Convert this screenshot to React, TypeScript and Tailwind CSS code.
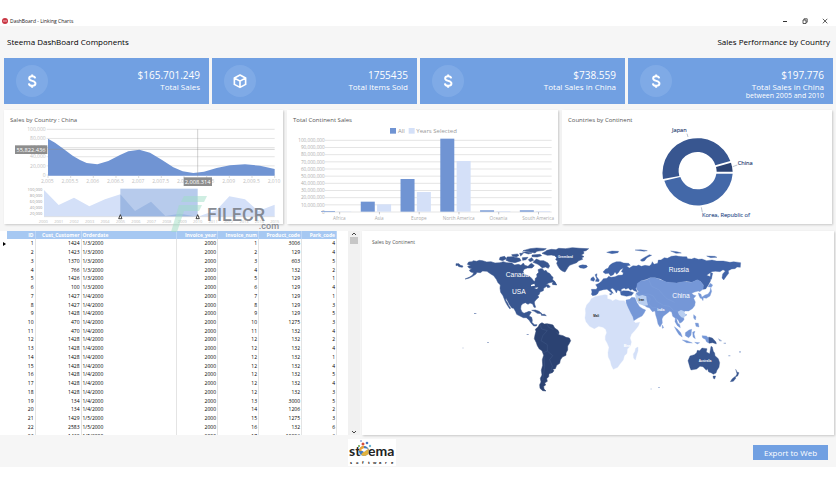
import React from "react";

const orders: string[][] = [
  ["1", "1424", "1/3/2000", "2000", "1", "3006", "4"],
  ["2", "1423", "1/3/2000", "2000", "2", "129", "4"],
  ["3", "1370", "1/3/2000", "2000", "3", "603", "5"],
  ["4", "766", "1/3/2000", "2000", "4", "132", "2"],
  ["5", "1426", "1/3/2000", "2000", "5", "129", "1"],
  ["6", "100", "1/3/2000", "2000", "6", "129", "4"],
  ["7", "1427", "1/4/2000", "2000", "7", "129", "1"],
  ["8", "1427", "1/4/2000", "2000", "8", "129", "3"],
  ["9", "1428", "1/4/2000", "2000", "9", "129", "5"],
  ["10", "470", "1/4/2000", "2000", "10", "1275", "3"],
  ["11", "470", "1/4/2000", "2000", "11", "132", "4"],
  ["12", "1428", "1/4/2000", "2000", "12", "132", "2"],
  ["13", "1428", "1/4/2000", "2000", "12", "132", "4"],
  ["14", "1428", "1/4/2000", "2000", "12", "132", "1"],
  ["15", "1428", "1/4/2000", "2000", "12", "132", "4"],
  ["16", "1428", "1/4/2000", "2000", "12", "132", "5"],
  ["17", "1428", "1/4/2000", "2000", "12", "132", "4"],
  ["18", "1428", "1/4/2000", "2000", "12", "132", "3"],
  ["19", "134", "1/4/2000", "2000", "13", "3000", "5"],
  ["20", "134", "1/4/2000", "2000", "14", "1206", "2"],
  ["21", "1429", "1/5/2000", "2000", "15", "1275", "3"],
  ["22", "2583", "1/5/2000", "2000", "16", "132", "6"],
  ["23", "1430", "1/5/2000", "2000", "17", "10006", "6"],
];

const headings = ["ID", "Cust_Customer", "Orderdate", "Invoice_year", "Invoice_num", "Product_code", "Park_code"];

function DollarIcon() {
  return (
    <svg viewBox="0 0 24 24" className="h-[18px] w-[18px]" fill="none" stroke="white" strokeWidth="2.6" aria-hidden="true">
      <path d="M16.3 8.6C16 6.7 14.5 5.7 12.2 5.7 9.800 5.700 8.200 6.800 8.200 8.600c0 4.400 8.400 2.200 8.400 6.700 0 1.900-1.700 3.100-4.300 3.100-2.700 0-4.300-1.200-4.500-3.300M12.200 3.200v3M12.200 18v3" />
    </svg>
  );
}

function BoxIcon() {
  return (
    <svg viewBox="0 0 24 24" className="h-[18px] w-[18px]" fill="none" stroke="white" strokeWidth="2.2" strokeLinejoin="round" aria-hidden="true">
      <path d="M12 4 19.500 8v8.500L12 20.500 4.500 16.500V8ZM4.500 8 12 12.200 19.500 8M12 12.200v8" />
    </svg>
  );
}

function StatCard({ value, label, note, icon }: { value: string; label: string; note?: string; icon: React.ReactNode }) {
  return (
    <section className="flex h-[46px] items-start justify-between bg-[#71a0e2] pr-[9px] pl-3 text-white">
      <div className="mt-[7px] flex h-8 w-8 items-center justify-center rounded-full bg-[#7faae6]">{icon}</div>
      <div className="flex flex-col items-end pt-[11px]">
        <strong className="text-[10px] leading-[12px] font-normal">{value}</strong>
        <span className="text-[8px] leading-[11px]">{label}</span>
        {note && <span className="text-[7px] leading-[7px]">{note}</span>}
      </div>
    </section>
  );
}

function Panel({ title, children }: { title: string; children: React.ReactNode }) {
  return (
    <section className="relative bg-white shadow-[1px_1px_2px_#c8c8c8]">
      <h2 className="h-[15px] pt-[5px] pl-[6px] text-[6px] leading-[10px] text-[#555]">{title}</h2>
      {children}
    </section>
  );
}

const areaTicks = ["2,005", "2,005.5", "2,006", "2,006.5", "2,007", "2,007.5", "2,008", "2,008.5", "2,009", "2,009.5", "2,010"];
const years = ["2000", "2001", "2002", "2003", "2004", "2005", "2006", "2007", "2008", "2009", "2010", "2011", "2012", "2013", "2014", "2015"];

function AreaChart() {
  return (
    <svg viewBox="12 60 837 297" className="block w-full" fontSize="15" fill="#c0c0c0">
      {["100,000", "80,000", "60,000", "40,000", "20,000", "0"].map((t, i) => (
        <g key={t}>
          <path d={`M140 ${73 + i * 27.4}H824`} stroke="#dedede" strokeWidth="2.500" />
          <text x="137" y={78 + i * 27.4} textAnchor="end">{t}</text>
        </g>
      ))}
      <path fill="#7094d3" d="M144 101 165 113 190 131 218 152 240 165 260 174 292 178 325 168 360 150 385 139 418 134 450 143 485 164 520 187 548 199 580 204 612 200 650 189 690 181 735 178 780 182 824 192V212H144Z" />
      <path d="M144 133H824M593 73V215" stroke="#8e8e8e" strokeWidth="2" fill="none" opacity=".6" />
      {areaTicks.map((t, i) => (
        <g key={t}>
          <path d={`M${144 + i * 68} 212v7`} stroke="#c8c8c8" strokeWidth="2" />
          <text x={142 + i * 68} y="235" textAnchor="middle">{t}</text>
        </g>
      ))}
      <rect x="45" y="121" width="97" height="26" fill="#8d8d8d" />
      <text x="93" y="140" textAnchor="middle" fill="white" fontSize="17">55,822.436</text>
      <rect x="551" y="217" width="85" height="26" fill="#8d8d8d" />
      <text x="593" y="236" textAnchor="middle" fill="white" fontSize="17">2,008.314</text>

      {["100,000", "80,000", "60,000", "40,000", "20,000"].map((t, i) => (
        <text key={t} x="127" y={259 + i * 17.500} textAnchor="end" fill="#999" fontSize="12">{t}</text>
      ))}
      <path fill="#d4e0f8" d="M132 255 176 300 222 278 268 304 315 283 361 268V335H132ZM593 335 650 315 688 274 735 283 775 318 824 299V335Z" />
      <rect x="361" y="251" width="232" height="84" fill="#b7cbec" />
      <path fill="#9db8e3" d="M361 268 405 318 453 290 496 333 540 326 593 335H361Z" />
      <path d="M132 335H824" stroke="#dcdcdc" strokeWidth="2" />
      {years.map((t, i) => (
        <text key={t} x={130 + i * 46.300} y="355" textAnchor="middle" fontSize="12">{t}</text>
      ))}
      <path d="M361 329 366 341H356ZM593 329 598 341H588Z" fill="white" stroke="#222" strokeWidth="2.500" />
    </svg>
  );
}

const continents = [
  { name: "Africa", all: 2, sel: 1 },
  { name: "Asia", all: 30, sel: 22 },
  { name: "Europe", all: 98, sel: 59 },
  { name: "North America", all: 219, sel: 152 },
  { name: "Oceania", all: 4, sel: 2 },
  { name: "South America", all: 4, sel: 2 },
];
const barTicks = ["100,000,000", "90,000,000", "80,000,000", "70,000,000", "60,000,000", "50,000,000", "40,000,000", "30,000,000", "20,000,000", "10,000,000", "0"];

function BarChart() {
  return (
    <svg viewBox="21 60 813 297" className="block w-full" fontSize="14" fill="#ababab">
      <rect x="330" y="69" width="18" height="17" fill="#7094d3" />
      <text x="354" y="83" fontSize="18" fill="#999">All</text>
      <rect x="386" y="69" width="18" height="17" fill="#d4e0f8" />
      <text x="409" y="83" fontSize="18" fill="#999">Years Selected</text>
      {barTicks.map((t, i) => (
        <g key={t}>
          <path d={`M135 ${106 + i * 21.500}H815`} stroke="#e0e0e0" strokeWidth="2.500" />
          <text x="134" y={111 + i * 21.500} textAnchor="end">{t}</text>
        </g>
      ))}
      {continents.map((c, i) => (
        <g key={c.name}>
          <rect x={123 + i * 119.300} y={320 - c.all} width="42" height={c.all} fill="#7094d3" />
          <rect x={172 + i * 119.300} y={320 - c.sel} width="42" height={c.sel} fill="#d4e0f8" />
          <path d={`M${179 + i * 119.300} 321v7`} stroke="#a8a8a8" strokeWidth="2" />
          <text x={178 + i * 119.300} y="344" textAnchor="middle">{c.name}</text>
        </g>
      ))}
    </svg>
  );
}

function DonutChart() {
  return (
    <svg viewBox="6 60 810 297" className="block w-full" fontSize="17">
      <path fill="#385690" d="M309 222A105 105 0 0 1 511 168L466 181A56 56 0 0 0 358 213Z" />
      <path fill="#2b4272" d="M513 173A105 105 0 0 1 518 200H470A56 56 0 0 0 468 186Z" />
      <path fill="#4368a8" d="M518 206A105 105 0 0 1 313 227L361 216A56 56 0 0 0 469 206Z" />
      <path d="M384 96 381 86M518 185 532 180M424 307 427 322" stroke="#9aa4b5" strokeWidth="2" fill="none" />
      <g strokeWidth=".4">
        <text x="336" y="82" fill="#2b4272" stroke="#2b4272">Japan</text>
        <text x="533" y="179" fill="#2b4272" stroke="#2b4272">China</text>
        <text x="426" y="337" fill="#385690" stroke="#385690">Korea, Republic of</text>
      </g>
    </svg>
  );
}

function WorldMap() {
  return (
    <svg viewBox="0 48 1416 564" className="block w-full" fill="white">
      <g transform="translate(234 12)">
        <g fill="#385690" stroke="#385690" strokeWidth="1.500">
          <path d="M82 88 86 81 96 80 100 77 110 79 118 76 128 77 140 81 153 80 165 84 180 83 190 80 200 83 215 84 224 90 235 88 243 91 250 84 254 91 264 94 270 88 275 85 283 92 276 99 262 99 252 103 249 110 254 119 264 122 270 125 276 131 281 138 285 139 286 130 291 126 290 118 296 112 294 104 301 101 307 101 313 108 318 106 322 112 330 116 334 122 339 127 338 134 344 139 350 150 343 148 338 141 326 144 318 149 325 149 331 156 323 158 320 154 311 160 310 167 300 171 298 178 293 182 297 186 288 194 283 201 284 208 287 217 282 217 278 207 270 204 264 208 256 203 248 206 243 212 242 222 246 231 252 235 260 232 267 229 274 231 270 238 267 243 275 247 277 256 276 262 283 269 291 269 289 273 281 273 273 264 267 255 259 248 250 248 240 243 230 238 227 230 221 220 216 219 209 210 204 200 198 190 197 195 203 204 207 213 212 220 209 221 202 211 197 202 194 195 189 182 182 172 180 160 181 150 174 143 169 133 161 122 151 116 141 109 128 108 121 113 111 112 108 117 98 124 86 130 75 132 89 126 98 120 101 113 92 111 88 106 95 101 87 99 83 94 92 92Z" />
          <path d="M48 86 57 86 61 91 69 93 67 97 57 95 52 91 48 92ZM306 55 315 50 321 46 334 43 348 44 356 40 377 41 397 38 420 40 446 41 438 47 430 49 432 55 424 60 432 65 425 68 428 73 416 77 410 83 399 87 389 91 384 97 379 105 375 111 367 108 360 103 354 94 350 85 353 78 347 74 350 68 344 62 334 60 322 61Z" />
          <path d="M416 94 427 90 439 91 442 95 432 100 420 98ZM249 47 270 41 290 39 319 41 311 46 291 49 285 54 270 51ZM247 51 261 51 276 54 265 57ZM239 55 250 55 242 63ZM276 60 300 58 305 62 292 66 276 65ZM215 59 232 57 237 61 229 66 218 64ZM180 67 194 64 199 71 188 77 178 74ZM201 66 217 65 239 70 243 77 225 83 208 80 198 76ZM247 68 264 67 258 74 248 76ZM265 74 275 68 281 76 270 80ZM279 82 289 72 301 77 311 77 324 84 329 93 325 100 316 96 307 99 298 91 292 87ZM337 144 344 140 349 149 338 149ZM275 226 286 225 297 229 306 236 292 235 283 229ZM303 238 314 238 319 242 304 241Z" />
        </g>
        <path fill="#2b4272" stroke="#2b4272" strokeWidth="1.500" d="M285 300 288 289 286 283 294 276 299 267 306 263 313 267 321 266 331 268 339 270 344 279 354 286 357 292 356 299 369 302 378 307 388 309 392 317 387 327 383 333 383 345 378 354 378 361 367 366 361 375 359 385 350 391 346 401 338 403 342 407 337 413 327 416 326 425 320 431 322 439 314 444 317 450 311 454 312 462 318 468 308 467 300 460 299 449 303 441 301 430 306 420 304 406 308 391 307 374 311 361 306 347 298 342 292 332 289 323 283 311Z" />
        <path fill="none" stroke="#6079a7" strokeWidth="1" opacity=".6" d="M300 269 305 282 322 287 309 301 303 317 322 329 322 348 309 354M321 267 326 277 341 284M322 348 338 362 329 374 337 394 331 414M312 366 314 395 308 435M356 299 350 291" />
        <path d="m332 153 6 2-4 4ZM273 150l10-4 2 6-12 2ZM283 159l12-2-4 5Z" />
        <path fill="#8c9ec4" d="M102 234h7v3h-7ZM141 322h6v2h-6ZM67 338h4v2h-4ZM260 297h6v3h-6Z" />
      </g>
      <g transform="translate(624 12)">
        <path fill="#4164a8" d="M64 178 66 171 64 163 79 163 82 157 77 149 87 145 95 138 100 131 111 130 116 124 123 127 135 125 145 121 158 120 160 113 154 110 160 99 151 104 145 113 140 118 135 111 130 119 122 123 116 115 106 116 99 111 107 102 114 100 119 91 127 85 139 80 151 80 161 84 176 85 181 91 170 93 178 99 189 92 199 93 206 90 214 94 225 91 238 93 244 88 247 80 252 88 263 85 265 75 273 75 283 68 292 70 304 64 318 62 326 64 339 65 350 65 353 71 365 72 373 69 385 73 396 72 410 77 426 75 440 78 460 78 480 82 491 80 512 83 511 97 501 96 495 101 485 102 475 107 476 115 469 124 461 135 456 129 458 117 466 108 459 104 450 110 436 109 425 110 410 121 424 126 421 139 415 150 407 162 399 163 400 150 391 139 381 135 366 142 350 139 335 142 320 144 302 143 285 140 272 132 255 128 240 128 230 133 214 137 204 146 202 156 197 160 202 170 192 167 187 163 181 166 175 159 167 163 163 159 154 163 154 171 143 165 139 174 135 166 128 160 121 162 130 175 125 174 111 163 100 164 87 168 83 176 78 180 68 182ZM151 172 159 167 176 168 191 173 185 181 170 184 153 180ZM63 130 70 125 75 133 71 139 62 136ZM75 119 81 116 80 125 88 135 86 140 76 139 80 131ZM28 92 39 90 51 94 47 99 34 98ZM110 52 126 48 146 49 144 53 126 56ZM211 75 222 68 238 59 245 61 231 68 223 78 215 79ZM195 45 212 44 232 47 222 49ZM302 48 321 50 334 54 318 55ZM410 63 434 64 441 67 422 68ZM421 111 428 115 424 133 421 128ZM118 177 126 175 123 180Z" stroke="#4164a8" />
        <path fill="#7597d7" stroke="#7597d7" d="M202 145 214 137 229 135 241 128 256 128 272 134 290 141 320 144 339 140 365 142 382 134 391 139 400 150 399 163 389 170 385 168 374 171 365 175 371 180 378 182 371 190 376 201 374 212 367 221 356 228 346 228 339 232 330 229 332 236 341 245 342 254 336 261 329 265 326 257 319 249 323 264 329 269 331 278 322 272 315 260 316 250 308 244 305 231 299 229 290 236 280 244 276 252 277 264 270 276 264 267 261 253 257 240 255 228 247 230 239 219 230 216 218 208 211 190 201 184 198 174 206 170 199 161ZM168 195 179 193 185 187 195 188 201 203 209 215 218 221 227 225 222 235 216 243 204 249 190 258 187 248 180 239 177 226 169 211ZM277 270 281 278 277 280ZM313 275 323 283 332 293 337 306 327 299 320 288ZM337 315 351 317 367 324 350 323ZM346 293 357 285 365 283 363 301 356 308 346 302ZM368 291 375 289 372 297 376 311 369 306ZM374 322 389 323 382 327ZM396 302 409 303 416 309 417 324 410 321 406 313 398 309ZM371 239 378 245 376 255 371 249ZM376 264 385 265 387 276 378 274ZM393 188 405 180 414 177 420 169 422 158 425 169 420 183 409 190 400 188 399 197ZM414 155 421 145 428 150 424 157ZM385 174 393 178 396 188 391 190 387 182ZM343 238 351 239 346 243Z" />
        <path fill="#b8cef0" d="M195 177 207 183 217 180 229 184 230 194 234 211 222 212 206 206 198 193ZM323 230 333 225 341 228 348 240 341 249 334 247 327 239Z" />
        <path fill="#d4e0f8" stroke="#d4e0f8" d="M64 191 75 185 88 182 105 179 112 181 112 191 123 194 128 198 137 193 149 197 163 197 169 207 174 219 182 235 188 246 191 259 197 264 209 262 205 273 195 286 184 298 180 309 184 321 181 333 172 342 171 355 163 362 160 374 150 387 143 397 130 403 124 391 121 378 115 366 114 353 117 337 112 325 106 314 106 304 110 293 107 283 99 277 86 274 73 281 59 274 48 260 45 249 47 235 46 222 50 210 59 200ZM191 369 190 357 195 349 197 340 204 336 204 347 199 363 196 375Z" />
        <path fill="#385690" stroke="#385690" d="M354 377 360 363 373 359 380 353 382 346 389 347 396 339 411 341 409 351 419 356 423 334 427 336 430 349 434 354 435 362 445 371 449 383 447 397 441 406 438 414 430 418 423 413 416 411 412 401 409 406 399 395 390 394 380 402 363 405 360 398ZM429 423 437 423 434 432 430 430ZM497 403 501 411 507 413 503 423 495 427 501 417ZM494 425 498 429 490 439 481 440 486 432ZM416 306 427 309 438 321 439 327 428 323 417 325Z" />
        <path fill="none" stroke="#9bb7e9" strokeWidth="1" opacity=".4" d="M203 181 222 179 235 177 250 183 260 199 280 211 299 214 312 228 323 227M237 136 245 154 266 164 278 178 291 191 314 202M232 183 241 191 236 206 247 219 260 217" />
        <path fill="#9aaed5" d="M449 316h6v3h-6ZM461 323h7v3h-7ZM475 361h6v3h-6ZM508 348h4v5h-4ZM241 461h5v2h-5ZM264 457h6v2h-6ZM444 310l9 5-5 3Z" />
      </g>
      <g fontFamily="'Liberation Sans', Arial, sans-serif">
        <g fontSize="20">
          <text x="431" y="137">Canada</text>
          <text x="450" y="189">USA</text>
          <text x="920" y="123">Russia</text>
          <text x="931" y="202">China</text>
        </g>
        <text x="785" y="347" fontSize="12" fontWeight="700">Brazil</text>
        <g fontSize="9" fontWeight="700">
          <text x="588" y="80">Greenland</text>
          <text x="1010" y="392">Australia</text>
          <text x="886" y="241">India</text>
          <text x="830" y="210" fill="#222">Iran</text>
          <text x="694" y="257" fill="#222">Mali</text>
        </g>
      </g>
    </svg>
  );
}

function OrdersTable() {
  return (
    <div className="flex h-[204px] overflow-hidden bg-white">
      <div className="w-[7px] pt-[10px] pl-[2px]">
        <svg viewBox="0 0 4 6" className="h-[6px] w-[4px]" aria-hidden="true"><path d="M1 1 4 3 1 5Z" /></svg>
      </div>
      <div className="min-w-0 flex-1 overflow-hidden pr-[11px]">
        <table className="h-[209px] w-full table-fixed border-collapse text-[5px] leading-[8px] text-black">
          <colgroup>
            <col className="w-[28px]" /><col className="w-[46px]" /><col /><col className="w-[41px]" />
            <col className="w-[41px]" /><col className="w-[43px]" /><col className="w-[35px]" />
          </colgroup>
          <thead className="bg-[#a6c8f2] text-white">
            <tr>
              {headings.map((h, i) => (
                <th key={h} scope="col" className={`border-r border-[#bcd6f6] px-px py-0 font-bold ${i === 2 ? "text-left" : "text-right"}`}>{h}</th>
              ))}
            </tr>
          </thead>
          <tbody>
            {orders.map((row) => (
              <tr key={row[0]}>
                {row.map((cell, i) => (
                  <td key={i} className={`border-r border-[#e4e4e4] px-px py-0 font-medium ${i === 2 ? "text-left" : "text-right"}`}>{cell}</td>
                ))}
              </tr>
            ))}
          </tbody>
        </table>
      </div>
      <div className="flex w-[12px] flex-col items-center justify-between bg-[#f1f1f1]">
        <div className="flex w-full flex-col items-center">
          <button aria-label="Scroll up" className="flex h-[6px] w-full items-center justify-center">
            <svg viewBox="0 0 6 4" className="h-[4px] w-[6px]" fill="none" stroke="#444"><path d="M1 3 3 1 5 3" /></svg>
          </button>
          <div className="h-[7px] w-[8px] bg-[#c6c6c6]" />
        </div>
        <button aria-label="Scroll down" className="flex h-[6px] w-full items-center justify-center">
          <svg viewBox="0 0 6 4" className="h-[4px] w-[6px]" fill="none" stroke="#444"><path d="M1 1 3 3 5 1" /></svg>
        </button>
      </div>
    </div>
  );
}

function SteemaLogo() {
  return (
    <svg viewBox="0 0 48 27" className="h-[27px] w-[48px] bg-white" role="img" aria-label="Steema Software">
      <g fontFamily="Lato, sans-serif" fontSize="14" fontWeight="700" fill="#222">
        <text x="1" y="17">st</text>
        <text x="20" y="17">ema</text>
      </g>
      <circle cx="16" cy="12" r="5" fill="#477bbd" />
      <path d="M11 12c0-3 2-5 5-5v5Z" fill="#e9a13b" />
      <path d="M13 16c2-4 5-3 7-7 2 4 0 8-4 8Z" fill="#e2b33e" />
      <path d="M13 11c2-2 4-2 7-1l-4 3Z" fill="white" />
      <circle cx="15" cy="5" r="1.500" fill="#d64c3c" /><circle cx="19" cy="4" r="1.300" fill="#4775c4" />
      <circle cx="11" cy="7" r="1" fill="#6aa64b" /><circle cx="22" cy="7" r="1.200" fill="#6db8d8" />
      <circle cx="13" cy="2" r=".8" fill="#4775c4" />
      <text x="2 8 14 20 25 31 37 43" y="25" fontSize="4" fontWeight="700" fill="#222">software</text>
    </svg>
  );
}

export default function App() {
  return (
    <div className="min-h-screen w-full bg-white pt-[15px] font-['Open_Sans','Noto_Sans',sans-serif] text-[#222]">
      <header className="flex h-[11px] items-center justify-between pr-[8px] pl-[2px]">
        <div className="flex items-center gap-[2px]">
          <svg viewBox="0 0 6 6" className="h-[6px] w-[6px]" aria-hidden="true">
            <circle cx="3" cy="3" r="3" fill="#c93542" /><path d="M1 3h4" stroke="#f2b7bd" />
          </svg>
          <span className="text-[5px] leading-[10px]">DashBoard - Linking Charts</span>
        </div>
        <div className="flex items-center gap-[14px]">
          <button aria-label="Minimize"><svg viewBox="0 0 6 6" className="h-[6px] w-[6px]"><path d="M1 3.500h4" stroke="#333" /></svg></button>
          <button aria-label="Restore"><svg viewBox="0 0 6 6" className="h-[6px] w-[6px]" fill="none" stroke="#333" strokeWidth=".8"><path d="M1 2h3v3.500H1ZM2 2V.8h3.200v3.400H4" /></svg></button>
          <button aria-label="Close"><svg viewBox="0 0 6 6" className="h-[6px] w-[6px]" fill="none" stroke="#333" strokeWidth=".8"><path d="m.8.8 4.500 4.500M5.300.8.8 5.300" /></svg></button>
        </div>
      </header>

      <main className="bg-[#f6f6f6] pb-px">
        <div className="flex h-[32px] items-center justify-between pr-[6px] pl-[7px] text-[8px] leading-[12px] text-black">
          <h1>Steema DashBoard Components</h1>
          <p>Sales Performance by Country</p>
        </div>

        <div className="grid grid-cols-4 gap-[3px] pr-[3px] pl-1">
          <StatCard value="$165.701.249" label="Total Sales" icon={<DollarIcon />} />
          <StatCard value="1755435" label="Total Items Sold" icon={<BoxIcon />} />
          <StatCard value="$738.559" label="Total Sales in China" icon={<DollarIcon />} />
          <StatCard value="$197.776" label="Total Sales in China" note="between 2005 and 2010" icon={<DollarIcon />} />
        </div>

        <div className="grid grid-cols-[279fr_271fr_270fr] gap-1 px-1 pt-[6px]">
          <Panel title="Sales by Country : China">
            <AreaChart />
            <div className="absolute top-[86px] right-[4px] z-10 flex items-start text-[#7b8089] opacity-90">
              <svg viewBox="0 0 37 36" className="h-[36px] w-[37px]" fill="#9fe0c6" opacity=".55" aria-hidden="true">
                <path d="M14 0H37L34 6H11ZM9 9H32L29 15H14L7 36H1Z" />
              </svg>
              <div className="flex flex-col items-end pt-[12px] font-[Roboto,sans-serif]">
                <span className="pr-[14px] text-[18px] leading-[14px] font-medium">FILECR</span>
                <span className="text-[9px] leading-[8px] font-medium">.com</span>
              </div>
            </div>
          </Panel>
          <Panel title="Total Continent Sales"><BarChart /></Panel>
          <Panel title="Countries by Continent"><DonutChart /></Panel>
        </div>

        <div className="grid grid-cols-[360fr_472fr] gap-[2px] pt-[7px] pr-[2px]">
          <OrdersTable />
          <section className="bg-white shadow-[1px_1px_2px_#c8c8c8]">
            <h2 className="h-[16px] pt-[7px] pl-[10px] text-[5px] leading-[9px] text-[#555]">Sales by Continent</h2>
            <WorldMap />
          </section>
        </div>

        <footer className="grid grid-cols-[348fr_48fr_440fr] items-center pt-[4px]">
          <div />
          <SteemaLogo />
          <button className="mr-[8px] h-[15px] w-[75px] justify-self-end bg-[#71a0e2] text-[8px] leading-[15px] text-white">Export to Web</button>
        </footer>
      </main>
    </div>
  );
}
